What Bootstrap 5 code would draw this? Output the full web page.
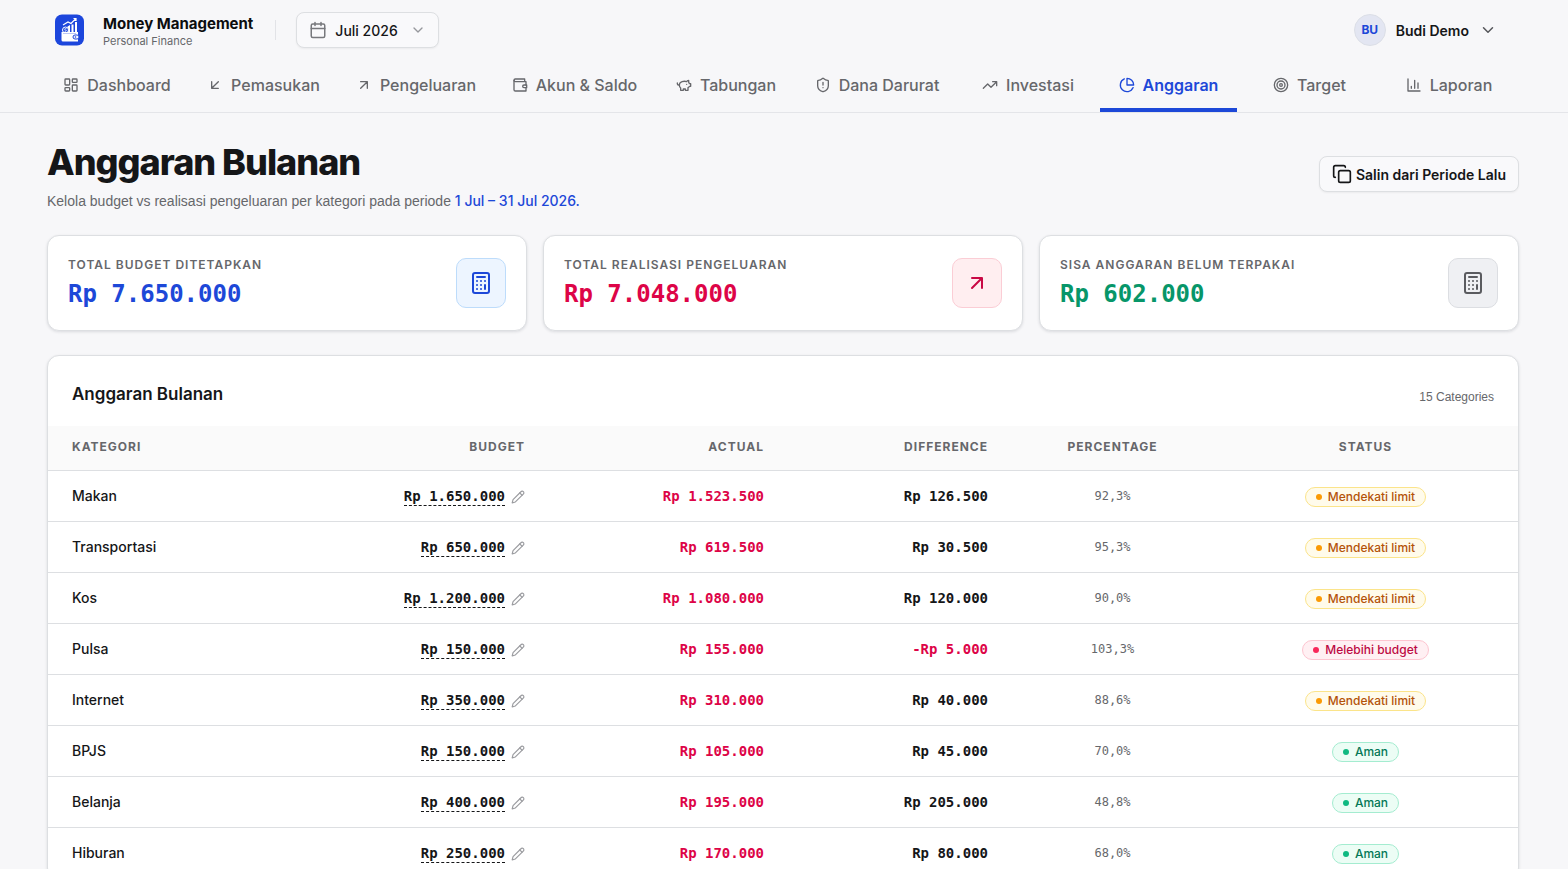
<!DOCTYPE html>
<html lang="id">
<head>
<meta charset="utf-8">
<meta name="viewport" content="width=device-width, initial-scale=1">
<title>Anggaran Bulanan – Money Management</title>
<link href="https://cdn.jsdelivr.net/npm/bootstrap@5.3.0/dist/css/bootstrap.min.css" rel="stylesheet">
<style>
:root{--ink:#151618;--soft:#66676b;--line:#dddfe2;--brand:#1d48d8;--rose:#dd0447;--green:#079669}
body{background:#f7f7f9;color:var(--ink);font-family:Inter,"Liberation Sans",sans-serif;font-size:14px;line-height:20px}
.shell{padding:0 49px 0 47px}
.ico{fill:none;stroke:currentColor;stroke-width:2;stroke-linecap:round;stroke-linejoin:round;flex:none;width:16px;height:16px}
.site-head{border-bottom:1px solid #e4e5e9}
.topbar{height:60px;padding:0 8px}
.brand{padding:2px 0 0 18px}
.brand-name{font-size:15px;font-weight:700;line-height:20px;color:#0c0d0f}
.brand-sub{font-size:11px;line-height:14px;color:var(--soft)}
.divider{width:1px;height:20px;background:#e2e3e7;margin:0 20px 0 22px}
.soft-btn{background:#f9f9fb;border:1px solid var(--line);border-radius:8px;height:36px;color:var(--ink);font-size:14px;box-shadow:0 1px 2px rgba(0,0,0,.05)}
.soft-btn:hover{background:#fff;border-color:var(--line)}
.period{padding:0 12px;font-weight:500}
.period .ico{width:18px;height:18px;stroke-width:2;color:#77787c}
.period .chev{width:16px;color:#96979c}
.copy-btn{padding:0 12px;font-weight:600}
.copy-btn .ico{width:20px;height:20px}
.avatar{width:32px;height:32px;border-radius:50%;background:#e3e6f2;border:1px solid #dcdfe7;color:var(--brand);font-size:12px;font-weight:700}
.user-btn{font-weight:600;font-size:14px;border:0;padding:0 14px 0 0;gap:10px;color:var(--ink)}
.user-btn .ico{width:18px;height:18px;color:#55565a}
.tabs{display:grid;grid-template-columns:140fr 153fr 152fr 165fr 138fr 164fr 138fr 143fr 139fr 140fr}
.tabs a{display:flex;align-items:center;justify-content:center;gap:8px;height:52px;margin:0 3px;padding-bottom:1px;border-bottom:4px solid transparent;border-top:3px solid transparent;color:var(--soft);font-size:16px;font-weight:500;white-space:nowrap;text-decoration:none}
.tabs a.current{color:var(--brand);border-bottom-color:var(--brand);font-weight:600}
.page-title{font-size:36px;line-height:50px;font-weight:800;letter-spacing:-1px}
.page-sub{font-family:"Liberation Sans",sans-serif;color:var(--soft)}
.page-sub strong{font-family:Inter,sans-serif;font-weight:500;color:var(--brand)}
.panel{background:#fff;border:1px solid var(--line);border-radius:12px;box-shadow:0 1px 3px rgba(20,25,40,.12)}
.stat{padding:20px}
.cap{font-size:12px;line-height:18px;font-weight:600;letter-spacing:1px;color:var(--soft);text-transform:uppercase}
.num{font-family:"DejaVu Sans Mono",monospace;font-weight:700}
.total{font-size:24px;line-height:32px}
.tile{width:50px;height:50px;border-radius:10px;border:1px solid}
.tile .ico{width:24px;height:24px}
.tile-blue{background:#edf5ff;border-color:#bddcfb;color:var(--brand)}
.tile-rose{background:#ffeef0;border-color:#fbcdd5;color:#c90945}
.tile-gray{background:#eff0f3;border-color:#dcdee2;color:#5a5b5f}
.c-brand{color:var(--brand)}.c-rose{color:var(--rose)}.c-green{color:var(--green)}
.panel-head{padding:24px 24px 18px}
.panel-title{font-size:17px;line-height:28px;font-weight:600}
.count{font-family:"Liberation Sans",sans-serif;font-size:12px;line-height:22px;color:var(--soft)}
.budget{width:100%;table-layout:fixed;border-collapse:separate;border-spacing:0}
.budget th,.budget td{padding:0 24px;height:51px;border-bottom:1px solid var(--line);white-space:nowrap}
.budget thead th{height:45px;background:#fafafa;padding-bottom:2px}
.budget tbody th{font-weight:500}
.edit{border:0;background:none;padding:0;gap:6px;color:inherit;font-size:14px}
.edit .amount{border-bottom:1px dashed var(--ink);line-height:18px}
.edit .ico{width:14px;height:14px;color:#9b9ca0}
.pct{font-family:"DejaVu Sans Mono",monospace;font-size:12px;color:var(--soft)}
.state{display:inline-flex;align-items:center;gap:6px;height:20px;padding:0 10px;border:1px solid;border-radius:10px;font-size:12px;line-height:18px;font-weight:500;vertical-align:middle}
.state::before{content:"";width:6px;height:6px;border-radius:50%;background:var(--dot)}
.st-near{--dot:#fb9a05;background:#fffbeb;border-color:#fbe48a;color:#b45309}
.st-over{--dot:#f8285a;background:#fff0f3;border-color:#fdc5d0;color:#bd0a43}
.st-safe{--dot:#10b981;background:#ecfdf5;border-color:#a4ecd0;color:#047857}
</style>
</head>
<body>
<svg width="0" height="0" class="d-none" aria-hidden="true">
<symbol id="calc" viewBox="0 0 24 24"><rect x="4" y="2" width="16" height="20" rx="2"/><path d="M8 6h8M16 14v4M16 10h.01M12 10h.01M8 10h.01M12 14h.01M8 14h.01M12 18h.01M8 18h.01"/></symbol>
<symbol id="up" viewBox="0 0 24 24"><path d="M7 7h10v10M7 17 17 7"/></symbol>
<symbol id="down" viewBox="0 0 24 24"><path d="m6 9 6 6 6-6"/></symbol>
<symbol id="pen" viewBox="0 0 24 24"><path d="M17 3a2.850 2.830 0 1 1 4 4L7.500 20.500 2 22l1.500-5.500Z"/><path d="m15 5 4 4"/></symbol>
</svg>
<header class="site-head">
<div class="shell">
<div class="topbar d-flex align-items-center">
<svg width="30" height="32" viewBox="0 0 30 32" class="flex-shrink-0" aria-hidden="true"><rect y="0.500" width="29" height="31" rx="7" fill="#1c46dc"/><path d="M8 11l5-3 3 1.500 5-5M18.500 4.500H21V7" fill="none" stroke="#fff" stroke-width="1.200"/><path d="M12.500 12.500 15 11v7h-2.500zM16.500 10.500h2V18h-2zM20 8h2v10h-2z" fill="#fff"/><circle cx="10.500" cy="16" r="3" fill="#1c46dc" stroke="#fff"/><path d="M11.500 14.700c-2-.8-2.500 1-1 1.300s1 1.900-1 1.200" fill="none" stroke="#fff" stroke-width=".8"/><path d="M6.500 18h16.500v9.500H8a1.500 1.500 0 0 1-1.500-1.500z" fill="#fff"/><path d="M8 19.500h13" stroke="#9eb0f1" stroke-width=".7"/><rect x="18" y="21" width="6" height="4" rx="2" fill="#fff" stroke="#1c46dc"/><circle cx="20.500" cy="23" r=".8" fill="#1c46dc"/></svg>
<div class="brand text-nowrap"><div class="brand-name">Money Management</div><div class="brand-sub">Personal Finance</div></div>
<div class="divider"></div>
<button type="button" class="btn soft-btn period d-flex align-items-center gap-2"><svg class="ico" viewBox="0 0 24 24"><rect x="3" y="4" width="18" height="18" rx="2"/><path d="M8 2v4M16 2v4M3 10h18"/></svg><span>Juli 2026</span><svg class="ico chev ms-1"><use href="#down"/></svg></button>
<button type="button" class="btn user-btn d-flex align-items-center ms-auto"><span class="avatar d-flex align-items-center justify-content-center">BU</span><span class="text-nowrap">Budi Demo</span><svg class="ico"><use href="#down"/></svg></button>
</div>
<nav class="tabs" aria-label="Menu utama">
<a href="#"><svg class="ico" viewBox="0 0 24 24"><rect x="3" y="3" width="7" height="9" rx="1"/><rect x="14" y="3" width="7" height="5" rx="1"/><rect x="14" y="12" width="7" height="9" rx="1"/><rect x="3" y="16" width="7" height="5" rx="1"/></svg>Dashboard</a>
<a href="#"><svg class="ico" viewBox="0 0 24 24"><path d="M17 7 7 17M17 17H7V7"/></svg>Pemasukan</a>
<a href="#"><svg class="ico"><use href="#up"/></svg>Pengeluaran</a>
<a href="#"><svg class="ico" viewBox="0 0 24 24"><path d="M21 12V7H5a2 2 0 0 1 0-4h14v4"/><path d="M3 5v14a2 2 0 0 0 2 2h16v-5"/><path d="M18 12a2 2 0 0 0 0 4h4v-4Z"/></svg>Akun &amp; Saldo</a>
<a href="#"><svg class="ico" viewBox="0 0 24 24"><path d="M19 5c-1.500 0-2.800 1.400-3 2-3.500-1.500-11-.3-11 5 0 1.800 0 3 2 4.500V20h4v-2h3v2h4v-4c1-.5 1.700-1 2-2h2v-4h-2c0-1-.5-1.500-1-2V5z"/><path d="M2 9v1c0 1.100.9 2 2 2h1M16 11h.01"/></svg>Tabungan</a>
<a href="#"><svg class="ico" viewBox="0 0 24 24"><path d="M20 13c0 5-3.500 7.500-7.660 8.950a1 1 0 0 1-.67-.01C7.500 20.500 4 18 4 13V6a1 1 0 0 1 1-1c2 0 4.500-1.200 6.240-2.720a1.170 1.170 0 0 1 1.520 0C14.510 3.810 17 5 19 5a1 1 0 0 1 1 1z"/><path d="M12 8v4M12 16h.01"/></svg>Dana Darurat</a>
<a href="#"><svg class="ico" viewBox="0 0 24 24"><path d="m22 7-8.500 8.500-5-5L2 17M16 7h6v6"/></svg>Investasi</a>
<a href="#" class="current" aria-current="page"><svg class="ico" viewBox="0 0 24 24"><path d="M21.210 15.890A10 10 0 1 1 8 2.830M22 12A10 10 0 0 0 12 2v10z"/></svg>Anggaran</a>
<a href="#"><svg class="ico" viewBox="0 0 24 24"><circle cx="12" cy="12" r="10"/><circle cx="12" cy="12" r="6"/><circle cx="12" cy="12" r="2"/></svg>Target</a>
<a href="#"><svg class="ico" viewBox="0 0 24 24"><path d="M3 3v18h18M18 17V9M13 17V5M8 17v-3"/></svg>Laporan</a>
</nav>
</div>
</header>
<main class="shell pt-4">
<div class="d-flex align-items-center justify-content-between mb-4">
<div><h1 class="page-title mb-1">Anggaran Bulanan</h1><p class="page-sub mb-0">Kelola budget vs realisasi pengeluaran per kategori pada periode <strong>1 Jul – 31 Jul 2026.</strong></p></div>
<button type="button" class="btn soft-btn copy-btn d-flex align-items-center text-nowrap"><svg class="ico me-1" viewBox="0 0 24 24"><rect x="8" y="8" width="14" height="14" rx="2"/><path d="M4 16c-1.100 0-2-.9-2-2V4c0-1.100.9-2 2-2h10c1.100 0 2 .9 2 2"/></svg>Salin dari Periode Lalu</button>
</div>
<div class="row row-cols-1 row-cols-md-3 g-3 mb-4">
<div class="col"><div class="panel stat d-flex align-items-center justify-content-between"><div><div class="cap mb-1">Total Budget Ditetapkan</div><div class="num total c-brand">Rp 7.650.000</div></div><div class="tile tile-blue d-flex align-items-center justify-content-center"><svg class="ico"><use href="#calc"/></svg></div></div></div>
<div class="col"><div class="panel stat d-flex align-items-center justify-content-between"><div><div class="cap mb-1">Total Realisasi Pengeluaran</div><div class="num total c-rose">Rp 7.048.000</div></div><div class="tile tile-rose d-flex align-items-center justify-content-center"><svg class="ico"><use href="#up"/></svg></div></div></div>
<div class="col"><div class="panel stat d-flex align-items-center justify-content-between"><div><div class="cap mb-1">Sisa Anggaran Belum Terpakai</div><div class="num total c-green">Rp 602.000</div></div><div class="tile tile-gray d-flex align-items-center justify-content-center"><svg class="ico"><use href="#calc"/></svg></div></div></div>
</div>
<section class="panel overflow-hidden">
<div class="panel-head d-flex align-items-end justify-content-between"><h2 class="panel-title mb-0">Anggaran Bulanan</h2><span class="count">15 Categories</span></div>
<table class="budget">
<colgroup><col style="width:251px"><col style="width:250px"><col style="width:239px"><col style="width:224px"><col style="width:201px"><col style="width:305px"></colgroup>
<thead><tr class="cap"><th scope="col">Kategori</th><th scope="col" class="text-end">Budget</th><th scope="col" class="text-end">Actual</th><th scope="col" class="text-end">Difference</th><th scope="col" class="text-center">Percentage</th><th scope="col" class="text-center">Status</th></tr></thead>
<tbody id="rows"></tbody>
</table>
</section>
</main>
<script src="https://cdn.jsdelivr.net/npm/bootstrap@5.3.0/dist/js/bootstrap.bundle.min.js"></script>
<script>
const states = {near: 'Mendekati limit', over: 'Melebihi budget', safe: 'Aman'};
const data = [
  ['Makan', '1.650.000', '1.523.500', 'Rp 126.500', '92,3%', 'near'],
  ['Transportasi', '650.000', '619.500', 'Rp 30.500', '95,3%', 'near'],
  ['Kos', '1.200.000', '1.080.000', 'Rp 120.000', '90,0%', 'near'],
  ['Pulsa', '150.000', '155.000', '-Rp 5.000', '103,3%', 'over'],
  ['Internet', '350.000', '310.000', 'Rp 40.000', '88,6%', 'near'],
  ['BPJS', '150.000', '105.000', 'Rp 45.000', '70,0%', 'safe'],
  ['Belanja', '400.000', '195.000', 'Rp 205.000', '48,8%', 'safe'],
  ['Hiburan', '250.000', '170.000', 'Rp 80.000', '68,0%', 'safe']
];
document.getElementById('rows').innerHTML = data.map(([name, budget, actual, diff, pct, state]) => `<tr>
<th scope="row">${name}</th>
<td class="text-end"><button type="button" class="edit d-inline-flex align-items-center" aria-label="Ubah budget ${name}"><span class="num amount">Rp ${budget}</span><svg class="ico"><use href="#pen"/></svg></button></td>
<td class="text-end num c-rose">Rp ${actual}</td>
<td class="text-end num ${diff[0] === '-' ? 'c-rose' : ''}">${diff}</td>
<td class="text-center pct">${pct}</td>
<td class="text-center"><span class="state st-${state}">${states[state]}</span></td>
</tr>`).join('');
</script>
</body>
</html>
